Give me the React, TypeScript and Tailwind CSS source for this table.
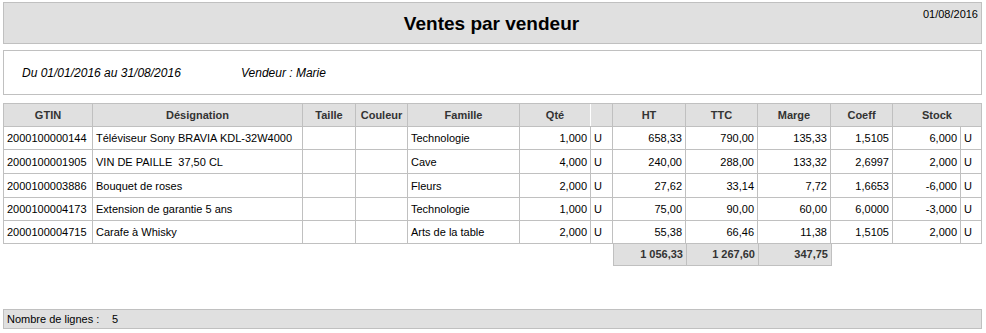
import React from "react";

const cols = [90, 210, 53, 52, 112, 71, 22, 73, 72, 73, 62, 68, 21];

type Row = string[];
const rows: Row[] = [
  ["2000100000144", "Téléviseur Sony BRAVIA KDL-32W4000", "", "", "Technologie", "1,000", "U", "658,33", "790,00", "135,33", "1,5105", "6,000", "U"],
  ["2000100001905", "VIN DE PAILLE  37,50 CL", "", "", "Cave", "4,000", "U", "240,00", "288,00", "133,32", "2,6997", "2,000", "U"],
  ["2000100003886", "Bouquet de roses", "", "", "Fleurs", "2,000", "U", "27,62", "33,14", "7,72", "1,6653", "-6,000", "U"],
  ["2000100004173", "Extension de garantie 5 ans", "", "", "Technologie", "1,000", "U", "75,00", "90,00", "60,00", "6,0000", "-3,000", "U"],
  ["2000100004715", "Carafe à Whisky", "", "", "Arts de la table", "2,000", "U", "55,38", "66,46", "11,38", "1,5105", "2,000", "U"],
];
const rowH = [23, 24, 24, 23, 23];
const rightCols = new Set([5, 7, 8, 9, 10, 11]);

const headers: { label: string; w: number; white?: boolean }[] = [
  { label: "GTIN", w: 90 },
  { label: "Désignation", w: 210 },
  { label: "Taille", w: 53 },
  { label: "Couleur", w: 52 },
  { label: "Famille", w: 112 },
  { label: "Qté", w: 71, white: true },
  { label: "", w: 22 },
  { label: "HT", w: 73 },
  { label: "TTC", w: 72 },
  { label: "Marge", w: 73 },
  { label: "Coeff", w: 62 },
  { label: "Stock", w: 89 },
];

export default function App() {
  return (
    <div
      className="relative w-[986px] h-[333px] bg-white text-black"
      style={{ fontFamily: '"Liberation Sans", Arial, sans-serif' }}
    >
      <div className="pt-[2px] pl-[3px] pr-[4px]">
        {/* Title bar */}
        <div className="relative h-[42px] border border-[#c0c0c0] bg-[#e0e0e0] flex items-center justify-center">
          <span className="text-[19px] font-bold leading-none ml-[-2px]">Ventes par vendeur</span>
          <span className="absolute right-[3px] top-[6px] text-[11px] leading-none">01/08/2016</span>
        </div>

        {/* Info box */}
        <div className="mt-[6px] h-[45px] border border-[#c0c0c0] bg-white flex items-center text-[12px] italic">
          <span className="ml-[18px] w-[219px]">Du 01/01/2016 au 31/08/2016</span>
          <span>Vendeur : Marie</span>
        </div>

        {/* Table */}
        <div className="mt-[8px] w-[979px] text-[11px]">
          <div className="flex h-[24px] border-t border-l border-b border-[#c0c0c0] bg-[#e0e0e0] text-[#333] font-bold">
            {headers.map((h, i) => (
              <div
                key={i}
                className={`flex items-center justify-center border-r ${h.white ? "border-white" : "border-[#c0c0c0]"}`}
                style={{ width: i === 0 ? h.w - 1 : h.w }}
              >
                {h.label}
              </div>
            ))}
          </div>
          {rows.map((r, ri) => (
            <div key={ri} className="flex border-l border-b border-[#c0c0c0]" style={{ height: rowH[ri] }}>
              {r.map((c, ci) => (
                <div
                  key={ci}
                  className={`flex items-center pt-[1px] border-r border-[#c0c0c0] whitespace-pre overflow-hidden ${rightCols.has(ci) ? "justify-end pr-[3px]" : "pl-[3px]"}`}
                  style={{ width: ci === 0 ? cols[ci] - 1 : cols[ci] }}
                >
                  {c}
                </div>
              ))}
            </div>
          ))}
          {/* Totals */}
          <div className="flex h-[22px]">
            <div className="w-[610px]" />
            <div className="flex h-[22px] border-l border-b border-[#c0c0c0] bg-[#e0e0e0] font-bold text-[#333]">
              <div className="w-[73px] flex items-center justify-end pr-[3px] border-r border-[#c0c0c0]">1 056,33</div>
              <div className="w-[72px] flex items-center justify-end pr-[3px] border-r border-[#c0c0c0]">1 267,60</div>
              <div className="w-[73px] flex items-center justify-end pr-[3px] border-r border-[#c0c0c0]">347,75</div>
            </div>
          </div>
        </div>

        {/* Footer */}
        <div className="mt-[43px] h-[20px] border border-[#c0c0c0] bg-[#e0e0e0] flex items-center text-[11px]">
          <span className="ml-[3px] w-[105px]">Nombre de lignes :</span>
          <span>5</span>
        </div>
      </div>
    </div>
  );
}
